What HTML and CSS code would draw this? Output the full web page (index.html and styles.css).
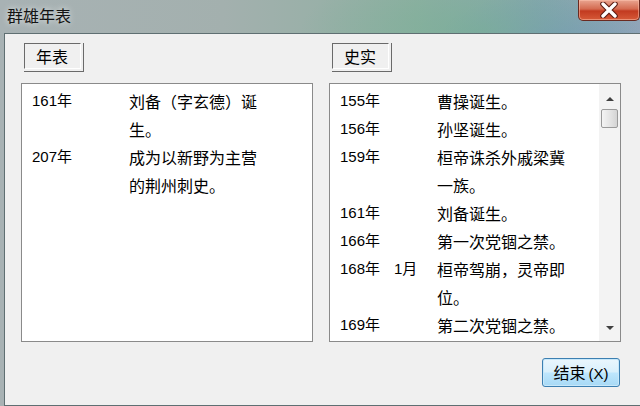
FILE: index.html
```html
<!DOCTYPE html>
<html lang="zh-CN">
<head>
    <meta charset="UTF-8">
    <meta name="viewport" content="width=device-width, initial-scale=1.0">
    <title>群雄年表</title>
    <link rel="stylesheet" href="styles.css">
</head>
<body>
    <div class="titlebar">
        <span class="title">群雄年表</span>
        <button class="close-btn" aria-label="关闭">
            <svg width="22" height="16" viewBox="0 0 22 16">
                <path d="M5 2 L17 14 M17 2 L5 14" stroke="#5a1a10" stroke-width="5.5" stroke-linecap="round"/>
                <path d="M5 2 L17 14 M17 2 L5 14" stroke="#ffffff" stroke-width="3.4" stroke-linecap="round"/>
            </svg>
        </button>
    </div>

    <div class="dialog">
        <div class="columns">
            <div class="panel">
                <div class="label-wrap"><div class="label">年表</div></div>
                <div class="list">
                    <div class="rows">
                        <div class="row"><span class="year">161年</span><span class="month"></span><span class="desc">刘备（字玄德）诞生。</span></div>
                        <div class="row"><span class="year">207年</span><span class="month"></span><span class="desc">成为以新野为主营的荆州刺史。</span></div>
                    </div>
                </div>
            </div>
            <div class="panel">
                <div class="label-wrap"><div class="label">史实</div></div>
                <div class="list">
                    <div class="rows">
                        <div class="row"><span class="year">155年</span><span class="month"></span><span class="desc">曹操诞生。</span></div>
                        <div class="row"><span class="year">156年</span><span class="month"></span><span class="desc">孙坚诞生。</span></div>
                        <div class="row"><span class="year">159年</span><span class="month"></span><span class="desc">桓帝诛杀外戚梁冀一族。</span></div>
                        <div class="row"><span class="year">161年</span><span class="month"></span><span class="desc">刘备诞生。</span></div>
                        <div class="row"><span class="year">166年</span><span class="month"></span><span class="desc">第一次党锢之禁。</span></div>
                        <div class="row"><span class="year">168年</span><span class="month">1月</span><span class="desc">桓帝驾崩，灵帝即位。</span></div>
                        <div class="row"><span class="year">169年</span><span class="month"></span><span class="desc">第二次党锢之禁。</span></div>
                    </div>
                    <div class="scrollbar">
                        <div class="arrow up"></div>
                        <div class="thumb"></div>
                        <div class="track"></div>
                        <div class="arrow down"></div>
                    </div>
                </div>
            </div>
        </div>
        <div class="footer">
            <button class="end-btn">结束<span class="key">(X)</span></button>
        </div>
    </div>
</body>
</html>
```

FILE: styles.css
```css
body {
    margin: 0;
    width: 640px;
    height: 406px;
    overflow: hidden;
    font-family: "Liberation Sans", "Noto Sans CJK SC", sans-serif;
    color: #000000;
    background:
        radial-gradient(ellipse 180px 60px at 480px 30px, rgba(120, 175, 150, 0.7), transparent),
        radial-gradient(ellipse 120px 50px at 560px 40px, rgba(110, 140, 200, 0.6), transparent),
        linear-gradient(90deg, #a8b2b4 0%, #a3b0ae 35%, #8fb0a2 65%, #87a6b0 85%, #9aa9b8 100%);
    display: flex;
    flex-direction: column;
}

.titlebar {
    height: 33px;
    display: flex;
    justify-content: space-between;
    align-items: flex-start;
}

.title {
    margin: 3px 0 0 7px;
    font-size: 16px;
    color: #141414;
    text-shadow: 0 0 6px rgba(255, 255, 255, 0.8);
}

.close-btn {
    width: 62px;
    height: 21px;
    padding: 0;
    border: 1px solid #6a2a20;
    border-top: none;
    border-radius: 0 0 5px 5px;
    background: linear-gradient(180deg, #e9a590 0%, #d46a50 45%, #c23a20 55%, #d65a38 100%);
    box-shadow: inset 0 0 0 1px rgba(255, 200, 180, 0.5);
    display: flex;
    align-items: center;
    justify-content: center;
}

.dialog {
    margin-left: 4px;
    height: 367px;
    background: #f0f0f0;
    border-top: 1px solid #5f6f72;
    border-left: 1px solid #5f6f72;
    border-bottom: 1px solid #5f6f72;
    padding: 9px 19px 0 16px;
    display: flex;
    flex-direction: column;
}

.columns {
    display: flex;
    gap: 16px;
}

.panel {
    width: 292px;
    display: flex;
    flex-direction: column;
}

.label-wrap {
    width: 60px;
    height: 29px;
    margin-left: 3px;
    border-right: 1px solid #6a6a6a;
    border-bottom: 1px solid #6a6a6a;
    box-sizing: border-box;
}

.label {
    width: 57px;
    height: 26px;
    box-sizing: border-box;
    border-top: 1px solid #6a6a6a;
    border-left: 1px solid #6a6a6a;
    border-right: 1px solid #ffffff;
    border-bottom: 1px solid #ffffff;
    background: #f0f0f0;
    font-family: "Noto Sans CJK SC", sans-serif;
    font-size: 16px;
    line-height: 24px;
    padding-left: 11px;
}

.list {
    margin-top: 11px;
    height: 259px;
    box-sizing: border-box;
    background: #ffffff;
    border: 1px solid #8a8a8a;
    display: flex;
    overflow: hidden;
}

.rows {
    flex: 1;
    padding: 3px 0 0 10px;
}

.row {
    display: grid;
    grid-template-columns: 54px 43px 132px;
    font-size: 16px;
    line-height: 28px;
}

.year,
.month {
    font-size: 15px;
}

.desc {
    font-family: "Noto Sans CJK SC", sans-serif;
}

.scrollbar {
    width: 21px;
    background: #f3f3f3;
    display: flex;
    flex-direction: column;
    align-items: center;
}

.arrow {
    width: 0;
    height: 0;
    border-left: 4px solid transparent;
    border-right: 4px solid transparent;
}

.arrow.up {
    margin-top: 13px;
    border-bottom: 4px solid #404040;
}

.arrow.down {
    margin-bottom: 11px;
    border-top: 4px solid #404040;
}

.thumb {
    margin-top: 8px;
    width: 17px;
    height: 19px;
    box-sizing: border-box;
    border: 1px solid #9a9a9a;
    border-radius: 2px;
    background: linear-gradient(90deg, #f4f4f4, #e2e2e2 60%, #d4d4d4);
}

.track {
    flex: 1;
}

.footer {
    margin-top: 16px;
    display: flex;
    justify-content: flex-end;
    padding-right: 1px;
}

.end-btn {
    width: 78px;
    height: 29px;
    border: 1px solid #3c7fb1;
    border-radius: 3px;
    background: linear-gradient(180deg, #eaf6fd 0%, #d9f0fc 48%, #bee6fd 52%, #a7d9f5 100%);
    box-shadow: inset 0 0 0 1px #c8e8fa;
    font-family: "Noto Sans CJK SC", sans-serif;
    font-size: 16px;
    color: #000000;
    padding: 0;
}

.key {
    font-family: "Liberation Sans", sans-serif;
    font-size: 15px;
    margin-left: 3px;
}
```
